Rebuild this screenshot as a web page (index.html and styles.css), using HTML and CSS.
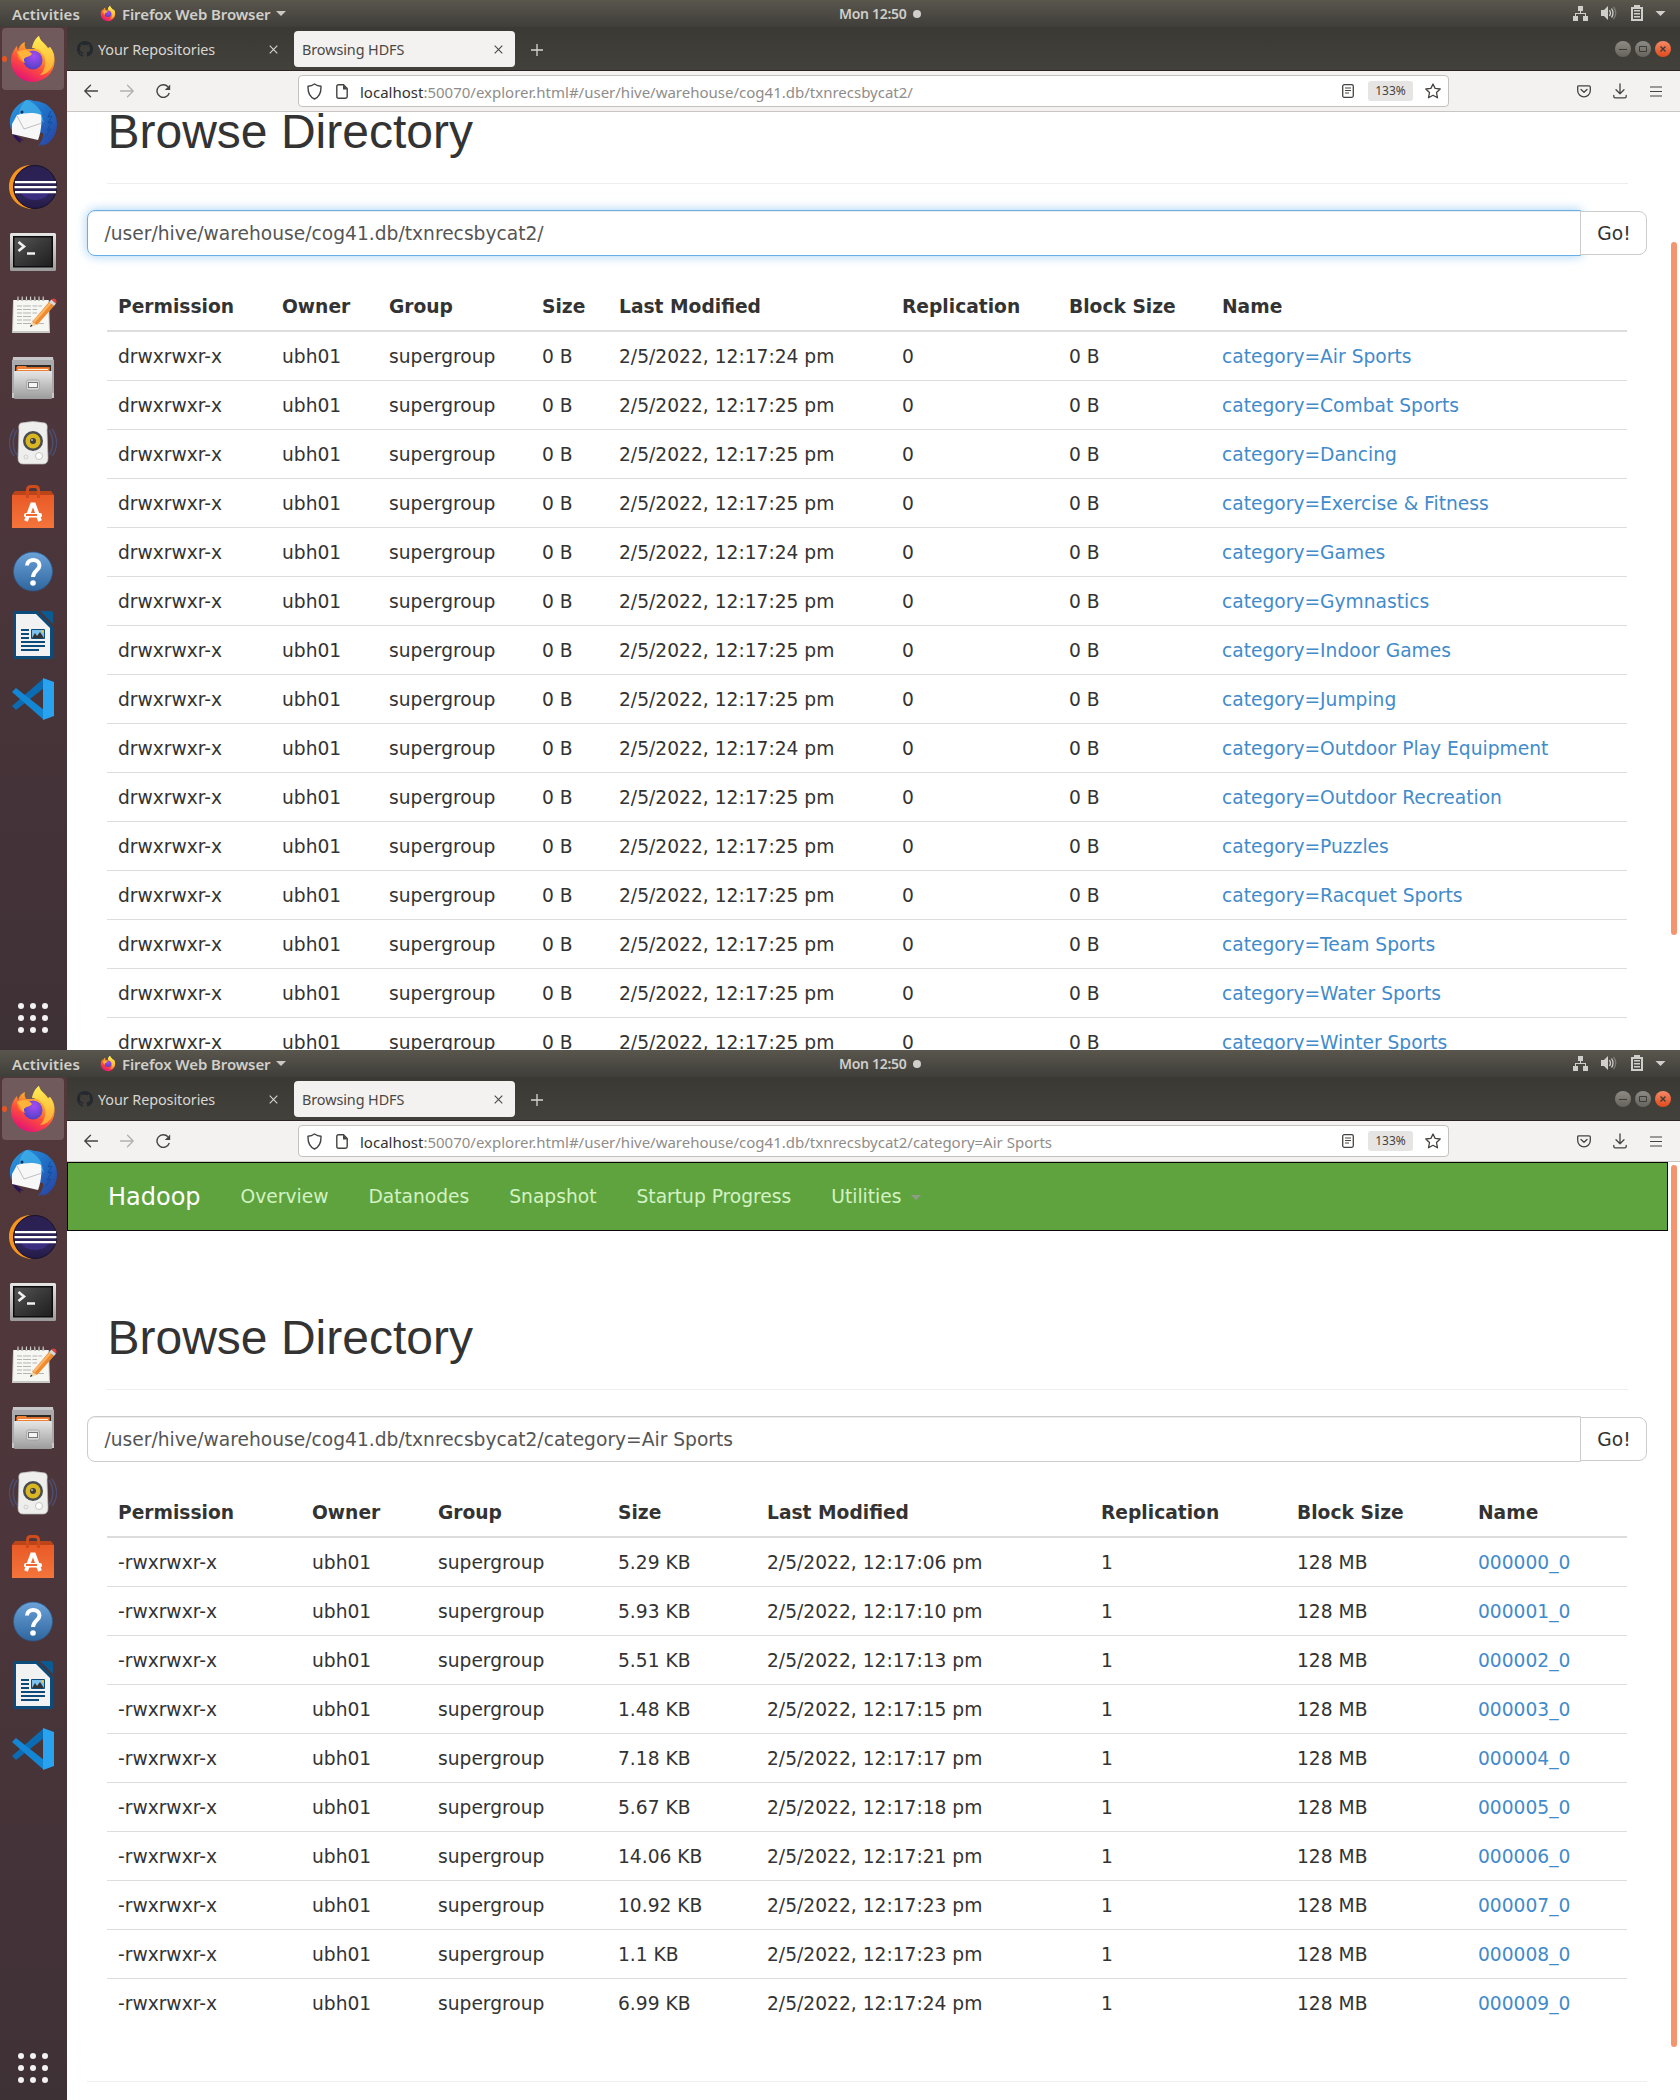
FILE: index.html
```html
<!DOCTYPE html>
<html lang="en">
<head>
<meta charset="utf-8">
<title>Browsing HDFS</title>
<link rel="stylesheet" href="styles.css">
</head>
<body>
<svg class="defs" width="0" height="0" aria-hidden="true">
  <defs>
    <linearGradient id="ff-body" x1="0.8" y1="0" x2="0.3" y2="1"><stop offset="0" stop-color="#fff44f"/><stop offset=".35" stop-color="#ffa52a"/><stop offset=".65" stop-color="#ff4c3c"/><stop offset="1" stop-color="#e0117a"/></linearGradient>
    <radialGradient id="ff-globe" cx=".55" cy=".3" r=".8"><stop offset="0" stop-color="#a84bf0"/><stop offset=".6" stop-color="#6b45d6"/><stop offset="1" stop-color="#4a3bb8"/></radialGradient>
    <linearGradient id="ff-flame" x1="0" y1="0" x2="0" y2="1"><stop offset="0" stop-color="#fff052"/><stop offset="1" stop-color="#ffa436"/></linearGradient>
    <linearGradient id="tb" x1="0" y1="0" x2="1" y2="1"><stop offset="0" stop-color="#2e9be0"/><stop offset=".5" stop-color="#1f6fc6"/><stop offset="1" stop-color="#2b3f9e"/></linearGradient>
    <linearGradient id="ecl" x1="0" y1="0" x2="0" y2="1"><stop offset="0" stop-color="#2b2052"/><stop offset=".75" stop-color="#2d2356"/><stop offset="1" stop-color="#231a45"/></linearGradient>
    <linearGradient id="metal" x1="0" y1="0" x2="0" y2="1"><stop offset="0" stop-color="#e6e6e6"/><stop offset="1" stop-color="#9b9b9b"/></linearGradient>
    <linearGradient id="term" x1="0" y1="0" x2="1" y2="1"><stop offset="0" stop-color="#555"/><stop offset=".5" stop-color="#383838"/><stop offset="1" stop-color="#1f1f1f"/></linearGradient>
    <linearGradient id="bag" x1="0" y1="0" x2="0" y2="1"><stop offset="0" stop-color="#e95a26"/><stop offset="1" stop-color="#f4753b"/></linearGradient>
    <linearGradient id="help" x1="0" y1="0" x2="0" y2="1"><stop offset="0" stop-color="#6ba2d8"/><stop offset="1" stop-color="#2f669f"/></linearGradient>
    <linearGradient id="wbtn" x1="0" y1="0" x2="0" y2="1"><stop offset="0" stop-color="#8d8b84"/><stop offset="1" stop-color="#65635c"/></linearGradient>
    <linearGradient id="wclose" x1="0" y1="0" x2="0" y2="1"><stop offset="0" stop-color="#f58a68"/><stop offset="1" stop-color="#e04a1a"/></linearGradient>
  </defs>
  <symbol id="i-firefox" viewBox="0 0 48 48">
    <path fill="url(#ff-body)" d="M2 27C2 19 5 14 8 11L9 16C10 11 13 8 16 7 15 10 16 12 17 14L26 14C24 8 27 3 30 1 31 6 36 8 39 13L41 12C45 17 46 22 45.500 27A22 21 0 0 1 24 47 22 21 0 0 1 2 27Z"/>
    <path fill="url(#ff-flame)" d="M23 13C24 7 27 3 30 1 30 6 36 9 40 15L41 12C45 17 46 23 44 29 42 36 36 40 31 40 38 34 38 22 32 17 29 14 26 13 23 13Z"/>
    <circle cx="24" cy="25" r="9.500" fill="url(#ff-globe)"/>
    <path fill="#ffb33b" d="M8 17C12 15 17 14 21 17L23 19C21 22 18 21 16 23 14 24 15 27 17 28 12 26 9 22 8 17Z"/>
    <path fill="#ff8a2a" d="M9 18C12 23 13 25 16 28 11 26 8 23 9 18Z"/>
  </symbol>
  <symbol id="i-thunderbird" viewBox="0 0 48 48">
    <path fill="url(#tb)" d="M15 2C21-1 24 2 26 2 39 3 48 13 48 25 48 37 41 45 33 47L35 45 29 47C32 43 35 39 34 34L4 34C-3 23 2 9 15 2Z"/>
    <path fill="#43b5ec" d="M17 1C22 2 28 6 32 13L35 24 32 21 34 29 31 17C27 14 15 13 10 17 10 9 14 4 17 1Z" opacity=".7"/>
    <path fill="#2a1259" d="M3 33L15 42 11 41 12 44C8 42 4 38 3 33Z"/>
    <path fill="#f7f7f8" d="M8 16C14 14 26 13 32 16 33 23 32 33 29 41L3 35 3 25Z"/>
    <path fill="none" stroke="#aeb1b5" stroke-width=".8" d="M8 17L15 30 33 24"/>
    <circle cx="13" cy="13" r="1.500" fill="#0c2c5c"/>
    <path stroke="#134e9f" fill="none" d="M42 12L39 18 43 17 39 24 43 23 38 31 42 30 36 38"/>
  </symbol>
  <symbol id="i-eclipse" viewBox="0 0 48 48">
    <path fill="#f7941e" d="M21 2C8 3 0 13 0 24S9 45 23 46C2 38 2 9 21 2Z"/>
    <circle cx="26" cy="24" r="21.500" fill="url(#ecl)" stroke="#17122c"/>
    <path fill="#3b2d80" d="M12 30A15 11 0 0 0 40 30Z"/>
    <path fill="#fff" d="M6 18h41v2.300H6zM5.500 23h42v2.300h-42zM6 28h41v2.300H6z"/>
  </symbol>
  <symbol id="i-terminal" viewBox="0 0 48 48">
    <rect x="1" y="6" width="46" height="38" rx="1.500" fill="url(#metal)"/>
    <rect x="4" y="9" width="40" height="31.500" fill="#0d0d0d"/>
    <rect x="5.500" y="10.500" width="37" height="28.500" fill="url(#term)"/>
    <path fill="none" stroke="#f1f1f1" stroke-width="2.600" d="M9.500 15L15 19.500 9.500 24M18 26.500h8"/>
  </symbol>
  <symbol id="i-notes" viewBox="0 0 48 48">
    <path fill="#c9c9c6" d="M4 9h36l1 33H3z"/>
    <path fill="#f6f6f3" d="M5 9h34l1 31H4z"/>
    <path stroke="#6b6b69" stroke-width="2" stroke-dasharray="2 2.200" d="M8 8.500h28"/>
    <path stroke="#dcdcda" stroke-width="4" stroke-dasharray="1 3.200" d="M8.500 7.500h28"/>
    <path stroke="#b5b5b2" stroke-width="1" stroke-dasharray="5 1 8 1.500" d="M8 15h25M8 18.500h20M8 22h20M8 25.500h15M8 29h16M8 32.500h27"/>
    <path fill="#f08a2c" d="M23 31L40 11 45 15 28 34Z"/><path fill="#f9b468" d="M24 30L41 11 42.500 12.500 25.500 32Z"/>
    <path fill="#f1d6a6" d="M23 31L28 34 21 36Z"/><path fill="#222" d="M22 33.500L23.500 35 21 36Z"/>
    <path fill="#d9d9d9" d="M40 11L42.500 8.500 47 12.500 45 15Z"/><path fill="#e0403c" d="M42.500 8.500C45 6 49 9 47 12.500Z"/>
  </symbol>
  <symbol id="i-files" viewBox="0 0 48 48">
    <path fill="#c7c6c8" d="M4 2h40l1 8v33H3V10z"/><path fill="#aaa9ab" d="M3 5h42v33H3z"/>
    <path fill="#2e2a28" d="M6 10h36v7H6z"/>
    <path fill="#c9551f" d="M7 12h34v5H7z"/><path fill="#ee8137" d="M8 11h9l1 1.500h22V17H8z"/><path fill="#fff3df" d="M9 14h30v1H9z"/>
    <rect x="5" y="16" width="38" height="28" rx="1" fill="url(#metal)"/>
    <rect x="17.500" y="25" width="13" height="10" rx="2" fill="#d8d8d8" stroke="#999" stroke-width=".7"/>
    <rect x="19.500" y="27.500" width="9" height="5" fill="#f5f5f5" stroke="#777" stroke-width="1"/>
  </symbol>
  <symbol id="i-music" viewBox="0 0 48 48">
    <g fill="none" stroke="#4d5f92" stroke-width="1.500" opacity=".6"><path d="M5 10C-1 19-1 29 5 37M8 11C3 19 3 29 8 36M43 10C49 19 49 29 43 37M40 11C45 19 45 29 40 36"/></g>
    <path fill="#eeeeed" stroke="#b7b7b7" stroke-width=".7" d="M12 4Q24 1 36 4Q39 5 38 11L39 39Q39 45 34 45H14Q9 45 9 39L10 11Q9 5 12 4Z"/>
    <circle cx="24" cy="22" r="10" fill="#4b4c4e"/><circle cx="24" cy="22" r="7.500" fill="#d9b722"/><circle cx="24" cy="22" r="3" fill="#3f3f3f"/><circle cx="23" cy="21" r="1" fill="#bbb"/>
    <circle cx="30" cy="37" r="3.500" fill="#fff" stroke="#c5c5c5"/><circle cx="17" cy="38" r="2" fill="none" stroke="#d0d0d0"/>
  </symbol>
  <symbol id="i-software" viewBox="0 0 48 48">
    <path fill="#bb4418" d="M3 12L6 8H42L45 12V15H3Z"/>
    <path fill="url(#bag)" d="M3 12h42v33H3z"/>
    <path fill="none" stroke="#cf4b1c" stroke-width="3" d="M18.500 15V7Q18.500 3.500 22 3.500H26Q29.500 3.500 29.500 7V15"/>
    <path fill="none" stroke="#fff" stroke-width="3.800" d="M17 38L23 21.500H25L31 38"/>
    <rect x="15" y="30" width="18" height="4.500" rx="2" fill="#fff"/><path fill="#f06a32" d="M17 31h11v2H17z"/>
  </symbol>
  <symbol id="i-help" viewBox="0 0 48 48">
    <circle cx="24" cy="24.500" r="19.500" fill="url(#help)" stroke="#2d5b8d" stroke-width=".8"/>
    <path fill="none" stroke="#fff" stroke-width="4" d="M18 18.500C18 11 30.500 11 30.500 18.500 30.500 23 24 24 24 30"/>
    <circle cx="24" cy="36" r="2.800" fill="#fff"/>
  </symbol>
  <symbol id="i-writer" viewBox="0 0 48 48">
    <path fill="#0d4b7a" d="M4 2Q4 0 6 0H28L44 16V46Q44 48 42 48H6Q4 48 4 46Z"/>
    <path fill="#f2f2f2" d="M7 3H27L41 17V45H7Z"/>
    <path fill="#0b5a92" d="M31 0H42Q44 0 44 2V13Z"/>
    <path stroke="#0d4b7a" stroke-width="2" d="M12 19h8M12 23h8M12 27h8M12 31h24M12 35h24M12 39h18"/>
    <path fill="#7cc0ee" stroke="#0d4b7a" d="M22.500 18.500h13v9h-13z"/><path fill="#333" d="M23 27L26 22 28 25 31 21 35 27Z"/><circle cx="33.500" cy="20.500" r="1.300" fill="#f4c542"/>
  </symbol>
  <symbol id="i-code" viewBox="0 0 48 48">
    <path fill="#0b6cb3" d="M3 31L7 35 35 13V3Z"/>
    <path fill="#1487d4" d="M3 17L7 13 35 35V45Z"/>
    <path fill="#29a3f0" d="M34 3L45 7V41L34 45Z"/>
  </symbol>
  <symbol id="i-apps" viewBox="0 0 30 30"><g fill="#f2f2f2"><circle cx="3" cy="3" r="3"/><circle cx="15" cy="3" r="3"/><circle cx="27" cy="3" r="3"/><circle cx="3" cy="15" r="3"/><circle cx="15" cy="15" r="3"/><circle cx="27" cy="15" r="3"/><circle cx="3" cy="27" r="3"/><circle cx="15" cy="27" r="3"/><circle cx="27" cy="27" r="3"/></g></symbol>
  <symbol id="i-github" viewBox="0 0 16 16"><path fill="#24292f" d="M8 0C3.580 0 0 3.580 0 8c0 3.540 2.290 6.530 5.470 7.590.4.070.55-.17.55-.38 0-.19-.01-.82-.01-1.490-2.010.37-2.530-.49-2.690-.94-.09-.23-.48-.94-.82-1.130-.28-.15-.68-.52-.01-.53.63-.01 1.080.58 1.230.82.72 1.210 1.870.87 2.330.66.07-.52.28-.87.51-1.070-1.780-.2-3.640-.89-3.640-3.950 0-.87.31-1.590.82-2.150-.08-.2-.36-1.020.08-2.120 0 0 .67-.21 2.200.82.64-.18 1.320-.27 2-.27s1.360.09 2 .27c1.530-1.040 2.200-.82 2.200-.82.44 1.100.16 1.920.08 2.120.51.56.82 1.270.82 2.150 0 3.070-1.870 3.750-3.650 3.950.29.25.54.73.54 1.480 0 1.070-.01 1.930-.01 2.200 0 .21.15.46.55.38A8.010 8.010 0 0 0 16 8c0-4.420-3.580-8-8-8z"/></symbol>
  <symbol id="i-status" viewBox="0 0 94 18">
    <g fill="#cfcecb"><path d="M5 1h5v5H5zM0 11h5v5H0zM10 11h5v5h-5zM7 6h1v2h5v3h-1V9H3v2H2V8h5z"/>
    <path d="M28 5h3l4-4v14l-4-4h-3z"/><path fill="none" stroke="#cfcecb" stroke-width="1.300" d="M36.500 5Q38.500 8 36.500 11M38.500 3.500Q41.500 8 38.500 12.500"/><path fill="none" stroke="#7c7a74" stroke-width="1.300" d="M40.500 2Q45 8 40.500 14"/>
    <path fill-rule="evenodd" d="M61 0h6v2h3v14H58V2h3zM60 4v10h8V4zM61 5h6v1.500h-6zM61 8h6v1.500h-6zM61 11h6v1.500h-6z"/>
    <path d="M82.500 6h10L87.500 11z"/></g>
  </symbol>
  <symbol id="i-window" viewBox="0 0 56 16">
    <circle cx="8" cy="8" r="8" fill="url(#wbtn)"/><circle cx="28" cy="8" r="8" fill="url(#wbtn)"/><circle cx="48" cy="8" r="8" fill="url(#wclose)"/>
    <path stroke="#3c3b37" fill="none" d="M4 8.500h8M24.500 5.500h7v5h-7z"/><path stroke="#3c3b37" stroke-width="1.400" d="M45.500 5.500l5 5M50.500 5.500l-5 5"/>
  </symbol>
  <symbol id="i-x" viewBox="0 0 9 9"><path fill="none" stroke="currentColor" stroke-width="1.100" d="M.7.7l7.600 7.600M8.300.7L.7 8.300"/></symbol>
  <symbol id="i-plus" viewBox="0 0 12 12"><path stroke="currentColor" stroke-width="1.300" d="M6 0v12M0 6h12"/></symbol>
  <symbol id="i-back" viewBox="0 0 14 14"><path fill="none" stroke="currentColor" stroke-width="1.300" stroke-linecap="round" stroke-linejoin="round" d="M6.500 1.200L.8 7l5.700 5.800M1 7h12.500"/></symbol>
  <symbol id="i-forward" viewBox="0 0 14 14"><path fill="none" stroke="currentColor" stroke-width="1.300" stroke-linecap="round" stroke-linejoin="round" d="M7.500 1.200L13.200 7l-5.700 5.800M13 7H.5"/></symbol>
  <symbol id="i-reload" viewBox="0 0 15 15"><path fill="none" stroke="currentColor" stroke-width="1.400" d="M12 2.800A6.300 6.300 0 1 0 13.300 9"/><path fill="currentColor" d="M14.200.5V6H8.800z"/></symbol>
  <symbol id="i-shield" viewBox="0 0 15 17"><path fill="none" stroke="currentColor" stroke-width="1.400" stroke-linejoin="round" d="M7.500 1Q10.500 3 14 3.300C14.200 9 12 14 7.500 16 3 14 .8 9 1 3.300Q4.500 3 7.500 1Z"/></symbol>
  <symbol id="i-page" viewBox="0 0 12 15"><path fill="none" stroke="currentColor" stroke-width="1.400" d="M2.500.8H7.500L11.200 4.500V12.500Q11.200 14.200 9.500 14.200H2.500Q.8 14.200.8 12.500V2.500Q.8.800 2.500.8Z"/><path fill="currentColor" d="M7 .8V5.500H11.500Z"/></symbol>
  <symbol id="i-reader" viewBox="0 0 12 14"><rect x=".7" y=".7" width="10.600" height="12.600" rx="1.500" fill="none" stroke="currentColor" stroke-width="1.300"/><path stroke="currentColor" d="M3 4h6M3 6.500h6M3 9h4"/></symbol>
  <symbol id="i-star" viewBox="0 0 16 16"><path fill="none" stroke="currentColor" stroke-width="1.300" stroke-linejoin="round" d="M8 1L10.100 5.400 15.200 6 11.500 9.500 12.500 14.800 8 12.300 3.500 14.800 4.500 9.500.8 6 5.900 5.400Z"/></symbol>
  <symbol id="i-pocket" viewBox="0 0 14 13"><path fill="none" stroke="currentColor" stroke-width="1.300" stroke-linecap="round" stroke-linejoin="round" d="M2 .8H12Q13.300.8 13.300 2V5.500A6.300 6.300 0 0 1 .7 5.500V2Q.7.800 2 .8ZM4 4.500L7 7.300 10 4.500"/></symbol>
  <symbol id="i-download" viewBox="0 0 14 16"><path fill="none" stroke="currentColor" stroke-width="1.300" stroke-linecap="round" stroke-linejoin="round" d="M7 .8V10.500M3 6.800L7 10.700 11 6.800M.8 12.500V13.500Q.8 14.800 2.200 14.800H11.800Q13.200 14.800 13.200 13.500V12.500"/></symbol>
  <symbol id="i-menu" viewBox="0 0 12 11"><path stroke="currentColor" stroke-width="1.200" d="M0 1h12M0 5.500h12M0 10h12"/></symbol>
</svg>

<section class="desktop">
  <header class="topbar">
    <span class="activities">Activities</span>
    <svg class="app-icon"><use href="#i-firefox"/></svg>
    <span class="app-name">Firefox Web Browser</span><i class="caret"></i>
    <span class="clock">Mon 12:50</span><i class="clock-dot"></i>
    <svg class="status"><use href="#i-status"/></svg>
  </header>
  <div class="workspace">
    <nav class="dock">
      <div class="dock-item active"><svg><use href="#i-firefox"/></svg></div>
      <div class="dock-item"><svg><use href="#i-thunderbird"/></svg></div>
      <div class="dock-item"><svg><use href="#i-eclipse"/></svg></div>
      <div class="dock-item"><svg><use href="#i-terminal"/></svg></div>
      <div class="dock-item"><svg><use href="#i-notes"/></svg></div>
      <div class="dock-item"><svg><use href="#i-files"/></svg></div>
      <div class="dock-item"><svg><use href="#i-music"/></svg></div>
      <div class="dock-item"><svg><use href="#i-software"/></svg></div>
      <div class="dock-item"><svg><use href="#i-help"/></svg></div>
      <div class="dock-item"><svg><use href="#i-writer"/></svg></div>
      <div class="dock-item"><svg><use href="#i-code"/></svg></div>
      <svg class="apps"><use href="#i-apps"/></svg>
    </nav>
    <div class="browser">
      <div class="tabs">
        <div class="tab"><svg class="favicon"><use href="#i-github"/></svg><span class="tab-title">Your Repositories</span><svg class="tab-close"><use href="#i-x"/></svg></div>
        <div class="tab selected"><span class="tab-title">Browsing HDFS</span><svg class="tab-close"><use href="#i-x"/></svg></div>
        <svg class="new-tab"><use href="#i-plus"/></svg>
        <svg class="window-buttons"><use href="#i-window"/></svg>
      </div>
      <div class="toolbar">
        <div class="nav-buttons"><svg class="ic-arrow"><use href="#i-back"/></svg><svg class="ic-arrow dim"><use href="#i-forward"/></svg><svg class="ic-reload"><use href="#i-reload"/></svg></div>
        <div class="urlbar">
          <svg class="ic-shield"><use href="#i-shield"/></svg><svg class="ic-page"><use href="#i-page"/></svg>
          <span class="url"><b>localhost</b>:50070/explorer.html#/user/hive/warehouse/cog41.db/txnrecsbycat2/</span>
          <svg class="ic-reader"><use href="#i-reader"/></svg><span class="zoom">133%</span><svg class="ic-star"><use href="#i-star"/></svg>
        </div>
        <div class="tools"><svg class="ic-pocket"><use href="#i-pocket"/></svg><svg class="ic-download"><use href="#i-download"/></svg><svg class="ic-menu"><use href="#i-menu"/></svg></div>
      </div>
      <div class="viewport">
        <main class="page scrolled">
          <h1>Browse Directory</h1>
          <form class="path-form"><div class="path focused">/user/hive/warehouse/cog41.db/txnrecsbycat2/</div><div class="go">Go!</div></form>
          <table class="listing">
            <colgroup><col class="d1"><col class="d2"><col class="d3"><col class="d4"><col class="d5"><col class="d6"><col class="d7"><col></colgroup>
            <thead><tr><th>Permission</th><th>Owner</th><th>Group</th><th>Size</th><th>Last Modified</th><th>Replication</th><th>Block Size</th><th>Name</th></tr></thead>
            <tbody>
              <tr><td>drwxrwxr-x</td><td>ubh01</td><td>supergroup</td><td>0 B</td><td>2/5/2022, 12:17:24 pm</td><td>0</td><td>0 B</td><td><a>category=Air Sports</a></td></tr>
              <tr><td>drwxrwxr-x</td><td>ubh01</td><td>supergroup</td><td>0 B</td><td>2/5/2022, 12:17:25 pm</td><td>0</td><td>0 B</td><td><a>category=Combat Sports</a></td></tr>
              <tr><td>drwxrwxr-x</td><td>ubh01</td><td>supergroup</td><td>0 B</td><td>2/5/2022, 12:17:25 pm</td><td>0</td><td>0 B</td><td><a>category=Dancing</a></td></tr>
              <tr><td>drwxrwxr-x</td><td>ubh01</td><td>supergroup</td><td>0 B</td><td>2/5/2022, 12:17:25 pm</td><td>0</td><td>0 B</td><td><a>category=Exercise &amp; Fitness</a></td></tr>
              <tr><td>drwxrwxr-x</td><td>ubh01</td><td>supergroup</td><td>0 B</td><td>2/5/2022, 12:17:24 pm</td><td>0</td><td>0 B</td><td><a>category=Games</a></td></tr>
              <tr><td>drwxrwxr-x</td><td>ubh01</td><td>supergroup</td><td>0 B</td><td>2/5/2022, 12:17:25 pm</td><td>0</td><td>0 B</td><td><a>category=Gymnastics</a></td></tr>
              <tr><td>drwxrwxr-x</td><td>ubh01</td><td>supergroup</td><td>0 B</td><td>2/5/2022, 12:17:25 pm</td><td>0</td><td>0 B</td><td><a>category=Indoor Games</a></td></tr>
              <tr><td>drwxrwxr-x</td><td>ubh01</td><td>supergroup</td><td>0 B</td><td>2/5/2022, 12:17:25 pm</td><td>0</td><td>0 B</td><td><a>category=Jumping</a></td></tr>
              <tr><td>drwxrwxr-x</td><td>ubh01</td><td>supergroup</td><td>0 B</td><td>2/5/2022, 12:17:24 pm</td><td>0</td><td>0 B</td><td><a>category=Outdoor Play Equipment</a></td></tr>
              <tr><td>drwxrwxr-x</td><td>ubh01</td><td>supergroup</td><td>0 B</td><td>2/5/2022, 12:17:25 pm</td><td>0</td><td>0 B</td><td><a>category=Outdoor Recreation</a></td></tr>
              <tr><td>drwxrwxr-x</td><td>ubh01</td><td>supergroup</td><td>0 B</td><td>2/5/2022, 12:17:25 pm</td><td>0</td><td>0 B</td><td><a>category=Puzzles</a></td></tr>
              <tr><td>drwxrwxr-x</td><td>ubh01</td><td>supergroup</td><td>0 B</td><td>2/5/2022, 12:17:25 pm</td><td>0</td><td>0 B</td><td><a>category=Racquet Sports</a></td></tr>
              <tr><td>drwxrwxr-x</td><td>ubh01</td><td>supergroup</td><td>0 B</td><td>2/5/2022, 12:17:25 pm</td><td>0</td><td>0 B</td><td><a>category=Team Sports</a></td></tr>
              <tr><td>drwxrwxr-x</td><td>ubh01</td><td>supergroup</td><td>0 B</td><td>2/5/2022, 12:17:25 pm</td><td>0</td><td>0 B</td><td><a>category=Water Sports</a></td></tr>
              <tr><td>drwxrwxr-x</td><td>ubh01</td><td>supergroup</td><td>0 B</td><td>2/5/2022, 12:17:25 pm</td><td>0</td><td>0 B</td><td><a>category=Winter Sports</a></td></tr>
            </tbody>
          </table>
        </main>
        <div class="scrollbar low"></div>
      </div>
    </div>
  </div>
</section>

<section class="desktop">
  <header class="topbar">
    <span class="activities">Activities</span>
    <svg class="app-icon"><use href="#i-firefox"/></svg>
    <span class="app-name">Firefox Web Browser</span><i class="caret"></i>
    <span class="clock">Mon 12:50</span><i class="clock-dot"></i>
    <svg class="status"><use href="#i-status"/></svg>
  </header>
  <div class="workspace">
    <nav class="dock">
      <div class="dock-item active"><svg><use href="#i-firefox"/></svg></div>
      <div class="dock-item"><svg><use href="#i-thunderbird"/></svg></div>
      <div class="dock-item"><svg><use href="#i-eclipse"/></svg></div>
      <div class="dock-item"><svg><use href="#i-terminal"/></svg></div>
      <div class="dock-item"><svg><use href="#i-notes"/></svg></div>
      <div class="dock-item"><svg><use href="#i-files"/></svg></div>
      <div class="dock-item"><svg><use href="#i-music"/></svg></div>
      <div class="dock-item"><svg><use href="#i-software"/></svg></div>
      <div class="dock-item"><svg><use href="#i-help"/></svg></div>
      <div class="dock-item"><svg><use href="#i-writer"/></svg></div>
      <div class="dock-item"><svg><use href="#i-code"/></svg></div>
      <svg class="apps"><use href="#i-apps"/></svg>
    </nav>
    <div class="browser">
      <div class="tabs">
        <div class="tab"><svg class="favicon"><use href="#i-github"/></svg><span class="tab-title">Your Repositories</span><svg class="tab-close"><use href="#i-x"/></svg></div>
        <div class="tab selected"><span class="tab-title">Browsing HDFS</span><svg class="tab-close"><use href="#i-x"/></svg></div>
        <svg class="new-tab"><use href="#i-plus"/></svg>
        <svg class="window-buttons"><use href="#i-window"/></svg>
      </div>
      <div class="toolbar">
        <div class="nav-buttons"><svg class="ic-arrow"><use href="#i-back"/></svg><svg class="ic-arrow dim"><use href="#i-forward"/></svg><svg class="ic-reload"><use href="#i-reload"/></svg></div>
        <div class="urlbar">
          <svg class="ic-shield"><use href="#i-shield"/></svg><svg class="ic-page"><use href="#i-page"/></svg>
          <span class="url"><b>localhost</b>:50070/explorer.html#/user/hive/warehouse/cog41.db/txnrecsbycat2/category=Air Sports</span>
          <svg class="ic-reader"><use href="#i-reader"/></svg><span class="zoom">133%</span><svg class="ic-star"><use href="#i-star"/></svg>
        </div>
        <div class="tools"><svg class="ic-pocket"><use href="#i-pocket"/></svg><svg class="ic-download"><use href="#i-download"/></svg><svg class="ic-menu"><use href="#i-menu"/></svg></div>
      </div>
      <div class="viewport">
        <main class="page">
          <div class="navbar"><span class="brand">Hadoop</span><span>Overview</span><span>Datanodes</span><span>Snapshot</span><span>Startup Progress</span><span>Utilities<i class="nav-caret"></i></span></div>
          <h1>Browse Directory</h1>
          <form class="path-form"><div class="path">/user/hive/warehouse/cog41.db/txnrecsbycat2/category=Air Sports</div><div class="go">Go!</div></form>
          <table class="listing">
            <colgroup><col class="f1"><col class="f2"><col class="f3"><col class="f4"><col class="f5"><col class="f6"><col class="f7"><col></colgroup>
            <thead><tr><th>Permission</th><th>Owner</th><th>Group</th><th>Size</th><th>Last Modified</th><th>Replication</th><th>Block Size</th><th>Name</th></tr></thead>
            <tbody>
              <tr><td>-rwxrwxr-x</td><td>ubh01</td><td>supergroup</td><td>5.29 KB</td><td>2/5/2022, 12:17:06 pm</td><td>1</td><td>128 MB</td><td><a>000000_0</a></td></tr>
              <tr><td>-rwxrwxr-x</td><td>ubh01</td><td>supergroup</td><td>5.93 KB</td><td>2/5/2022, 12:17:10 pm</td><td>1</td><td>128 MB</td><td><a>000001_0</a></td></tr>
              <tr><td>-rwxrwxr-x</td><td>ubh01</td><td>supergroup</td><td>5.51 KB</td><td>2/5/2022, 12:17:13 pm</td><td>1</td><td>128 MB</td><td><a>000002_0</a></td></tr>
              <tr><td>-rwxrwxr-x</td><td>ubh01</td><td>supergroup</td><td>1.48 KB</td><td>2/5/2022, 12:17:15 pm</td><td>1</td><td>128 MB</td><td><a>000003_0</a></td></tr>
              <tr><td>-rwxrwxr-x</td><td>ubh01</td><td>supergroup</td><td>7.18 KB</td><td>2/5/2022, 12:17:17 pm</td><td>1</td><td>128 MB</td><td><a>000004_0</a></td></tr>
              <tr><td>-rwxrwxr-x</td><td>ubh01</td><td>supergroup</td><td>5.67 KB</td><td>2/5/2022, 12:17:18 pm</td><td>1</td><td>128 MB</td><td><a>000005_0</a></td></tr>
              <tr><td>-rwxrwxr-x</td><td>ubh01</td><td>supergroup</td><td>14.06 KB</td><td>2/5/2022, 12:17:21 pm</td><td>1</td><td>128 MB</td><td><a>000006_0</a></td></tr>
              <tr><td>-rwxrwxr-x</td><td>ubh01</td><td>supergroup</td><td>10.92 KB</td><td>2/5/2022, 12:17:23 pm</td><td>1</td><td>128 MB</td><td><a>000007_0</a></td></tr>
              <tr><td>-rwxrwxr-x</td><td>ubh01</td><td>supergroup</td><td>1.1 KB</td><td>2/5/2022, 12:17:23 pm</td><td>1</td><td>128 MB</td><td><a>000008_0</a></td></tr>
              <tr><td>-rwxrwxr-x</td><td>ubh01</td><td>supergroup</td><td>6.99 KB</td><td>2/5/2022, 12:17:24 pm</td><td>1</td><td>128 MB</td><td><a>000009_0</a></td></tr>
            </tbody>
          </table>
          <hr class="foot">
        </main>
        <div class="scrollbar"></div>
      </div>
    </div>
  </div>
</section>
</body>
</html>
```
FILE: styles.css
```css
* { box-sizing: border-box; }
html, body { margin: 0; }
body { width: 1680px; height: 2100px; overflow: hidden; background: #fff; color: #333; font: 14px/20px "Noto Sans", "Open Sans", sans-serif; }
svg { display: block; flex: none; }
.defs { position: absolute; }
.desktop { height: 1050px; display: flex; flex-direction: column; overflow: hidden; }

/* System bar */
.topbar { height: 27px; flex: none; display: flex; align-items: center; padding-left: 12px; background: linear-gradient(#59564d, #3f3e39); color: #d0cfcb; font-weight: 600; white-space: nowrap; }
.activities { width: 88px; font-size: 15px; letter-spacing: .1px; }
.app-icon { width: 16px; height: 17px; }
.app-name { width: 155px; padding-left: 6px; font-size: 15px; letter-spacing: -.1px; }
.caret { border: 5px solid transparent; border-top: 5px solid #c9c8c4; border-bottom: 0; margin-left: 5px; }
.clock { margin-left: 553px; width: 74px; letter-spacing: -.3px; }
.clock-dot { width: 8px; height: 8px; border-radius: 50%; background: #d0cfcb; }
.status { width: 94px; height: 18px; margin: 1px 13px 0 auto; }

/* Launcher */
.workspace { flex: 1; min-height: 0; display: flex; }
.dock { width: 67px; flex: none; display: flex; flex-direction: column; align-items: flex-start; gap: 2px; padding: 1px 0 0 2px; background: linear-gradient(#53383a, #4c363b 45%, #3e3136); }
.dock-item { width: 62px; height: 62px; flex: none; display: grid; place-items: center; position: relative; }
.dock-item svg { width: 48px; height: 48px; }
.dock-item.active { background: #705a5c; border-radius: 4px; }
.dock-item.active::before { content: ""; position: absolute; left: 0; top: 28px; width: 5px; height: 6px; border-radius: 50%; background: #e95420; }
.apps { width: 30px; height: 30px; margin: auto 0 17px 16px; }

/* Browser chrome */
.browser { flex: 1; min-width: 0; display: flex; flex-direction: column; background: #fff; }
.tabs { height: 44px; flex: none; display: flex; align-items: center; background: linear-gradient(#3a3934, #42413c); border-bottom: 1px solid #2c2422; padding-top: 1px; color: #d8d6d1; }
.tab { width: 227px; height: 36px; display: flex; align-items: center; padding: 0 16px 0 10px; white-space: nowrap; }
.tab.selected { width: 221px; padding: 0 12px 0 8px; background: #f3f2f1; color: #4a4744; border-radius: 4px; }
.favicon { width: 16px; height: 16px; margin-right: 5px; }
.tab-title { flex: 1; font-size: 14.400px; letter-spacing: -.08px; padding-top: 1px; }
.tab-close { width: 9px; height: 9px; }
.new-tab { width: 12px; height: 12px; margin: 1px 0 0 16px; }
.window-buttons { width: 56px; height: 16px; margin: 0 9px 0 auto; }
.toolbar { height: 41px; flex: none; display: flex; align-items: center; background: #f3f2f1; border-bottom: 1px solid #c8c5c2; color: #454340; }
.nav-buttons { width: 231px; display: flex; align-items: center; gap: 22px; padding-left: 17px; }
.ic-arrow { width: 14px; height: 14px; }
.dim { color: #b3b1ae; }
.ic-reload { width: 15px; height: 15px; }
.urlbar { width: 1151px; height: 32px; display: flex; align-items: center; padding: 0 7px 0 8px; background: #fff; border: 1px solid #c5c2be; border-radius: 4px; }
.ic-shield { width: 15px; height: 17px; }
.ic-page { width: 12px; height: 15px; margin: 0 12px 0 14px; }
.url { flex: 1; padding-top: 1px; font-size: 15px; color: #8f8d8a; white-space: nowrap; }
.url b { font-weight: 400; color: #33312e; }
.ic-reader { width: 12px; height: 14px; }
.zoom { width: 45px; height: 20px; margin: 0 12px 0 14px; background: #e6e5e4; border-radius: 3px; font-size: 12px; text-align: center; }
.ic-star { width: 16px; height: 16px; }
.tools { flex: 1; display: flex; align-items: center; justify-content: flex-end; padding-right: 18px; }
.ic-pocket { width: 14px; height: 13px; margin-right: 22px; }
.ic-download { width: 14px; height: 16px; margin-right: 23px; }
.ic-menu { width: 12px; height: 11px; }

/* Web page */
.viewport { flex: 1; min-height: 0; display: flex; overflow: hidden; }
.page { width: 1601px; flex: none; overflow: hidden; font: 18.667px/26.667px "DejaVu Sans", sans-serif; }
.navbar { height: 69px; display: flex; align-items: center; gap: 40px; padding: 2px 0 0 40px; border: 1px solid #080808; background: #5fa33e; color: #d3f2c4; white-space: nowrap; }
.brand { font-size: 24px; color: #fff; }
.nav-caret { display: inline-block; vertical-align: middle; margin-left: 9px; border: 5px solid transparent; border-top-color: #8f9a88; border-bottom: 0; }
h1 { height: 53px; margin: 80px 40px 0; padding-left: .5px; font: 400 48px/53px "Liberation Sans", Arial, sans-serif; }
.scrolled h1 { margin-top: -7px; }
.path-form { margin: 25px 20px 0; display: flex; position: relative; }
.path-form::before { content: ""; position: absolute; left: 20px; right: 20px; top: 0; height: 1px; background: #eee; }
.path { width: 1494px; height: 46px; margin-top: 27px; padding: 10px 16.500px 0; border: 1px solid #ccc; border-radius: 8px 0 0 8px; color: #555; box-shadow: inset 0 1px 1px rgba(0,0,0,.075); }
.path.focused { border-color: #66afe9; box-shadow: inset 0 1px 1px rgba(0,0,0,.075), 0 0 11px rgba(102,175,233,.6); }
.go { width: 67px; height: 44px; margin: 28px 0 0 -1px; padding: 9px 0 0 1px; border: 1px solid #ccc; border-radius: 0 8px 8px 0; background: #fff; text-align: center; position: relative; }
.listing { width: 1520px; margin: 26px 0 0 40px; table-layout: fixed; border-spacing: 0; white-space: nowrap; }
th, td { padding: 0 0 0 11px; text-align: left; height: 49px; border-top: 1px solid #ddd; line-height: 27px; }
th { height: 50px; border-top: 0; border-bottom: 2px solid #ddd; font-weight: 700; }
tbody tr:first-child td { height: 48px; border-top: 0; }
a { color: #428bca; }
.d1 { width: 164px; } .d2 { width: 107px; } .d3 { width: 153px; } .d4 { width: 77px; } .d5 { width: 283px; } .d6 { width: 167px; } .d7 { width: 153px; }
.f1 { width: 194px; } .f2 { width: 126px; } .f3 { width: 180px; } .f4 { width: 149px; } .f5 { width: 334px; } .f6 { width: 196px; } .f7 { width: 181px; }
.foot { height: 1px; margin: 54px 21px 0 20px; border: 0; background: #eee; }
.scrollbar { width: 6px; height: 882px; margin: 3px 0 0 3px; border-radius: 3px; background: #f4956f; }
.scrollbar.low { height: 693px; margin-top: 130px; }
```
